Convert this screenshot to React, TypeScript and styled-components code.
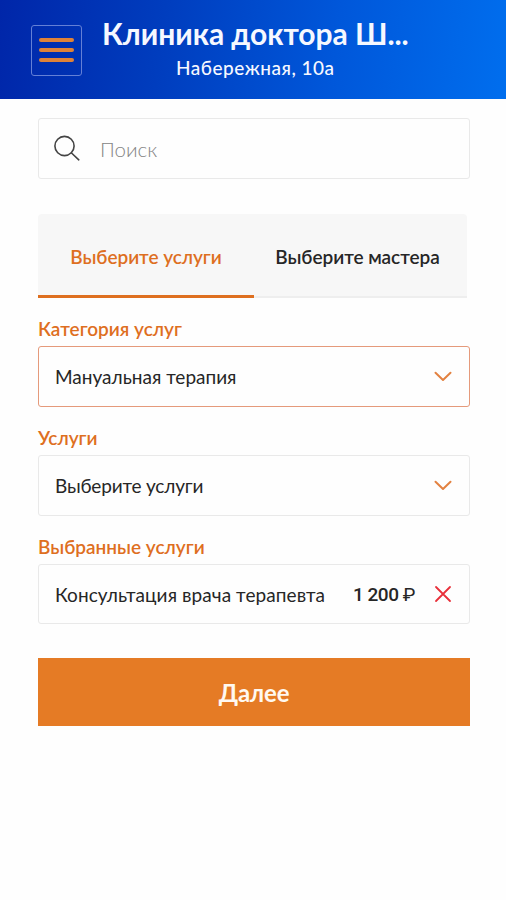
import React from 'react';
import styled, { createGlobalStyle, css } from 'styled-components';

const accent = '#de6f1f';

const GlobalStyle = createGlobalStyle`
  * { box-sizing: border-box; }
  body { margin: 0; background: #fefefe; }
  button, input { font: inherit; }
`;

const Screen = styled.div`
  width: 506px;
  height: 900px;
  background: #fefefe;
  font-family: Lato, 'Open Sans', sans-serif;
  font-size: 19px;
  line-height: 24px;
  color: #262626;
  overflow: hidden;
`;

const Header = styled.header`
  display: grid;
  grid-template-columns: 51px 1fr 51px;
  column-gap: 20px;
  height: 99px;
  padding: 0 32px 0 31px;
  background: linear-gradient(97deg, #0026a9 0%, #003dbe 32%, #0057da 66%, #006eee 100%);
  color: #f6f8ff;
`;

const MenuButton = styled.button`
  display: flex;
  flex-direction: column;
  align-items: center;
  gap: 6px;
  width: 51px;
  height: 51px;
  margin-top: 25px;
  padding: 12px 0 0;
  background: transparent;
  border: 1.5px solid #6480d6;
  border-radius: 3px;
`;

const MenuLine = styled.span`
  width: 35px;
  height: 4px;
  border-radius: 2px;
  background: #df8238;
`;

const Heading = styled.div`
  display: flex;
  flex-direction: column;
  align-items: center;
  white-space: nowrap;
`;

const Title = styled.h1`
  margin: 14px 0 0;
  font-size: 30px;
  line-height: 38px;
  font-weight: 700;
  letter-spacing: -0.05px;
`;

const Address = styled.p`
  margin: 4px 0 0;
  font-size: 19px;
  line-height: 24px;
  font-weight: 500;
  letter-spacing: 0.5px;
`;

const Content = styled.main`
  display: flex;
  flex-direction: column;
  padding: 19px 36px 0 38px;
`;

const Box = styled.div<{ $active?: boolean }>`
  display: flex;
  align-items: center;
  height: 61px;
  padding: 0 17px 0 16px;
  border: ${(p) => (p.$active ? '1.5px solid #e59a7b' : '1.5px solid #e9e9e9')};
  border-radius: 3px;
  background: #fefefe;
`;

const SearchBox = styled(Box)`
  gap: 20px;
  padding-left: 15px;
`;

const SearchInput = styled.input`
  flex: 1;
  min-width: 0;
  padding: 0;
  border: 0;
  outline: 0;
  background: transparent;
  font-size: 20.5px;
  font-weight: 300;
  color: #777;
  &::placeholder { color: #858585; opacity: 1; }
`;

const Tabs = styled.div`
  display: grid;
  grid-template-columns: 216px 1fr;
  height: 84px;
  margin: 35px 3px 0 0;
  background: #f7f7f7;
  border-radius: 4px 4px 0 0;
`;

const Tab = styled.button<{ $active?: boolean }>`
  display: flex;
  align-items: center;
  justify-content: center;
  padding: 4px 6px 0 0;
  border: 0;
  background: transparent;
  font-weight: 600;
  letter-spacing: -0.05px;
  border-bottom: 2px solid #eee;
  color: #262626;
  ${(p) => p.$active && css`
    padding: 5px 0 0;
    border-bottom: 3px solid ${accent};
    color: ${accent};
  `}
`;

const Field = styled.section`
  display: flex;
  flex-direction: column;
  margin-top: 19px;
`;

const Label = styled.div`
  height: 29px;
  font-weight: 600;
  color: ${accent};
`;

const Selected = styled(Box)`
  height: 60px;
`;

const Value = styled.span<{ $spacing?: number }>`
  flex: 1;
  padding-top: 1px;
  letter-spacing: ${(p) => p.$spacing ?? 0}px;
  white-space: nowrap;
`;

const Price = styled.span`
  margin-right: 19px;
  padding-top: 2px;
  font-family: Roboto, sans-serif;
  font-size: 19px;
  font-weight: 500;
  letter-spacing: -0.45px;
  white-space: nowrap;
`;

const Currency = styled.span`
  font-weight: 400;
`;

const NextButton = styled.button`
  height: 68px;
  margin-top: 34px;
  padding: 2px 0 0;
  border: 0;
  background: #e57b25;
  color: #fff8f0;
  font-size: 24px;
  font-weight: 700;
  letter-spacing: -0.2px;
`;

const SearchIcon = () => (
  <svg width="26" height="27" viewBox="0 0 26 27" fill="none" stroke="#444" strokeWidth="1.6" strokeLinecap="round">
    <circle cx="10.5" cy="11" r="9.6" />
    <path d="M17.5 18L24.8 24.8" />
  </svg>
);

const Chevron = () => (
  <svg width="18" height="12" viewBox="0 0 18 12" fill="none" stroke="#e38241" strokeWidth="2" strokeLinecap="round" strokeLinejoin="round">
    <path d="M1.5 1.8L9 9L16.5 1.8" />
  </svg>
);

const Cross = () => (
  <svg width="18" height="18" viewBox="0 0 18 18" fill="none" stroke="#e8303a" strokeWidth="1.8" strokeLinecap="round">
    <path d="M2 2L16 16M16 2L2 16" />
  </svg>
);

export default function App() {
  return (
    <Screen>
      <GlobalStyle />
      <Header>
        <MenuButton aria-label="Меню">
          <MenuLine />
          <MenuLine />
          <MenuLine />
        </MenuButton>
        <Heading>
          <Title>Клиника доктора Ш...</Title>
          <Address>Набережная, 10а</Address>
        </Heading>
      </Header>
      <Content>
        <SearchBox>
          <SearchIcon />
          <SearchInput placeholder="Поиск" />
        </SearchBox>
        <Tabs>
          <Tab $active>Выберите услуги</Tab>
          <Tab>Выберите мастера</Tab>
        </Tabs>
        <Field>
          <Label>Категория услуг</Label>
          <Box $active>
            <Value>Мануальная терапия</Value>
            <Chevron />
          </Box>
        </Field>
        <Field>
          <Label>Услуги</Label>
          <Box>
            <Value $spacing={-0.18}>Выберите услуги</Value>
            <Chevron />
          </Box>
        </Field>
        <Field>
          <Label>Выбранные услуги</Label>
          <Selected>
            <Value $spacing={0.08}>Консультация врача терапевта</Value>
            <Price>1 200 <Currency>₽</Currency></Price>
            <Cross />
          </Selected>
        </Field>
        <NextButton>Далее</NextButton>
      </Content>
    </Screen>
  );
}
